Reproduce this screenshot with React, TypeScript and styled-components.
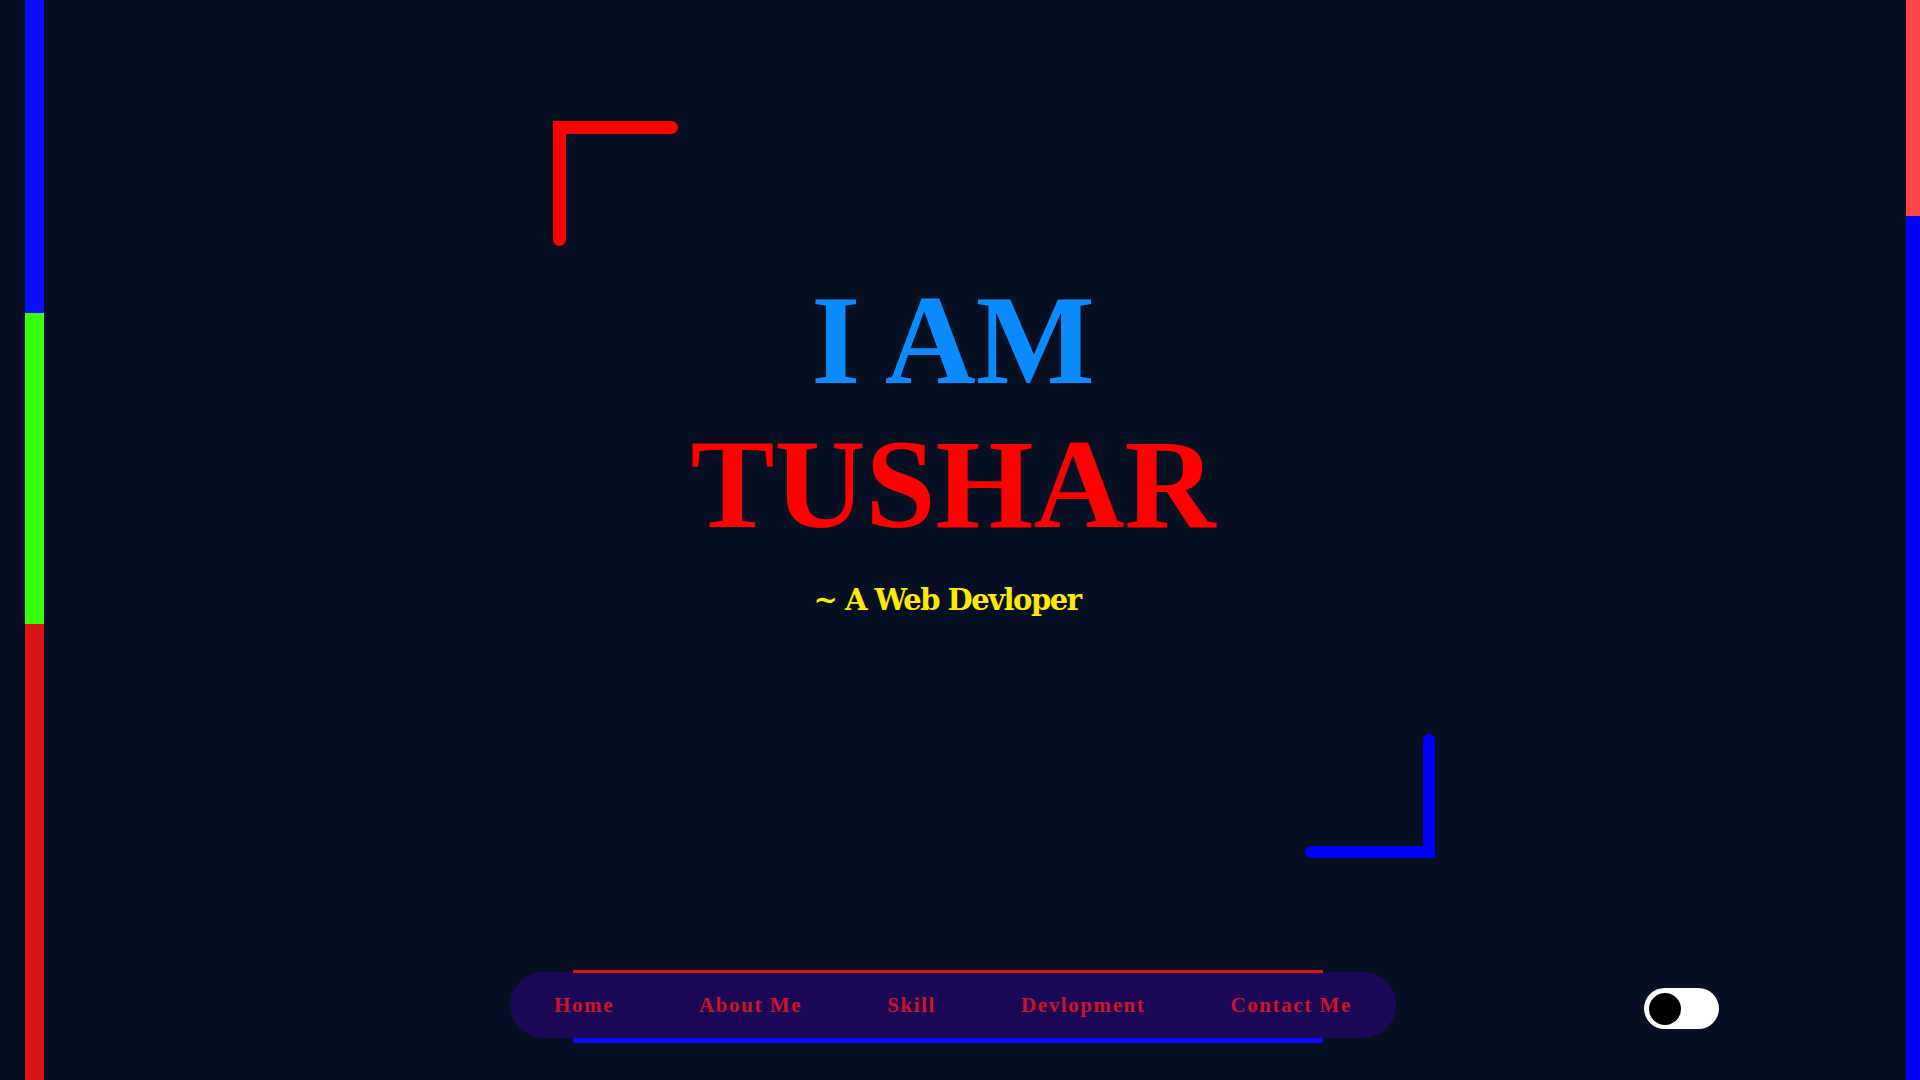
import React from "react";
import styled, { createGlobalStyle } from "styled-components";

const GlobalStyle = createGlobalStyle`
  html, body {
    margin: 0;
    padding: 0;
    background: #061022;
    overflow: hidden;
  }
  #root {
    height: 1080px;
  }
`;

const Page = styled.div`
  position: relative;
  display: flex;
  width: 1920px;
  height: 1080px;
  background: #061022;
`;

const SideRail = styled.div`
  position: absolute;
  left: 25px;
  top: 0;
  bottom: 0;
  width: 19px;
  display: flex;
  flex-direction: column;
  z-index: 2;
`;

const RailSegment = styled.div<{ $color: string; $height?: number }>`
  background: ${(p) => p.$color};
  ${(p) => (p.$height ? `height: ${p.$height}px;` : "flex: 1;")}
`;

const Main = styled.main`
  flex: 1;
  display: flex;
  flex-direction: column;
  padding-top: 121px;
`;

const Corner = styled.svg<{ $offset: number; $gap?: number }>`
  display: block;
  flex-shrink: 0;
  margin-left: ${(p) => p.$offset}px;
  margin-top: ${(p) => p.$gap ?? 0}px;
`;

const Title = styled.h1`
  margin: 23px 0 0;
  text-align: center;
  font-family: "Liberation Serif", "Times New Roman", serif;
  font-weight: 700;
  font-size: 126px;
  line-height: 144px;
`;

const TitleLine = styled.span<{ $color: string }>`
  display: block;
  color: ${(p) => p.$color};
`;

const Subtitle = styled.p`
  margin: 25px 0 0;
  padding-right: 12px;
  text-align: center;
  font-family: "DejaVu Serif", "Liberation Serif", serif;
  font-weight: 700;
  font-size: 29px;
  letter-spacing: -1.5px;
  line-height: 36px;
  color: #ffea00;
`;

const BottomRow = styled.div`
  display: grid;
  grid-template-columns: 1fr auto 1fr;
  margin-top: 112px;
`;

const NavBlock = styled.div`
  grid-column: 2;
  display: flex;
  flex-direction: column;
`;

const Rule = styled.div<{ $color: string; $thick: number }>`
  width: 750px;
  height: ${(p) => p.$thick}px;
  margin-left: 63px;
  background: ${(p) => p.$color};
  position: relative;
  z-index: 1;
`;

const Pill = styled.nav`
  box-sizing: border-box;
  width: 886px;
  height: 66px;
  margin-top: -1px;
  padding: 0 44px;
  border-radius: 33px;
  background: #1b0957;
  display: flex;
  align-items: center;
  justify-content: space-between;
`;

const NavLink = styled.a`
  font-family: "Liberation Serif", "Times New Roman", serif;
  font-weight: 700;
  font-size: 21px;
  letter-spacing: 1.6px;
  color: #cf1126;
  text-decoration: none;
`;

const ToggleCell = styled.div`
  grid-column: 3;
  display: flex;
  align-items: center;
  padding-left: 248px;
  padding-top: 4px;
`;

const Toggle = styled.button`
  box-sizing: border-box;
  width: 75px;
  height: 41px;
  border: none;
  border-radius: 21px;
  background: #ffffff;
  padding: 0 0 0 5px;
  display: flex;
  align-items: center;
  cursor: pointer;
`;

const Knob = styled.span`
  width: 32px;
  height: 32px;
  border-radius: 50%;
  background: #000000;
`;

const Scrollbar = styled.div`
  width: 14px;
  display: flex;
  flex-direction: column;
  background: #0000ff;
`;

const Thumb = styled.div`
  height: 216px;
  background: #ff4646;
`;

const links = ["Home", "About Me", "Skill", "Devlopment", "Contact Me"];

export default function App() {
  return (
    <>
      <GlobalStyle />
      <Page>
        <SideRail>
          <RailSegment $color="#0c0cff" $height={313} />
          <RailSegment $color="#35ff0c" $height={311} />
          <RailSegment $color="#d91515" />
        </SideRail>
        <Main>
          <Corner $offset={553} width={125} height={125} viewBox="0 0 125 125">
            <path
              d="M6.5 118.5 L6.5 6.5 L118.5 6.5"
              fill="none"
              stroke="#ff0000"
              strokeWidth={13}
              strokeLinecap="round"
              strokeLinejoin="miter"
            />
          </Corner>
          <Title>
            <TitleLine $color="#0a8bff">I AM</TitleLine>
            <TitleLine $color="#ff0000">TUSHAR</TitleLine>
          </Title>
          <Subtitle>~ A Web Devloper</Subtitle>
          <Corner $offset={1305} $gap={116} width={130} height={124} viewBox="0 0 130 124">
            <path
              d="M6 118 L124 118 L124 6"
              fill="none"
              stroke="#0000ff"
              strokeWidth={12}
              strokeLinecap="round"
              strokeLinejoin="miter"
            />
          </Corner>
          <BottomRow>
            <NavBlock>
              <Rule $color="#e01212" $thick={3} />
              <Pill>
                {links.map((l) => (
                  <NavLink key={l} href="#">
                    {l}
                  </NavLink>
                ))}
              </Pill>
              <Rule $color="#0a0af5" $thick={5} />
            </NavBlock>
            <ToggleCell>
              <Toggle aria-label="toggle theme">
                <Knob />
              </Toggle>
            </ToggleCell>
          </BottomRow>
        </Main>
        <Scrollbar>
          <Thumb />
        </Scrollbar>
      </Page>
    </>
  );
}
